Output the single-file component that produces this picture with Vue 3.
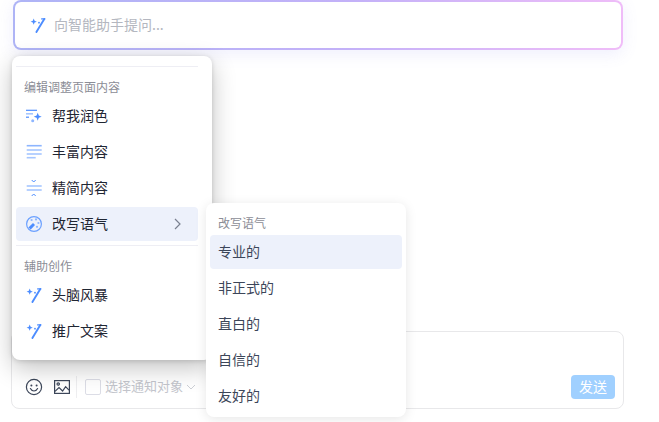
<script setup>
const group1 = [
  { text: '帮我润色', icon: 'polish' },
  { text: '丰富内容', icon: 'rich' },
  { text: '精简内容', icon: 'slim' },
  { text: '改写语气', icon: 'tone', active: true },
]
const group2 = ['头脑风暴', '推广文案']
const tones = ['专业的', '非正式的', '直白的', '自信的', '友好的']
</script>

<template>
  <div class="page">
    <div class="ask">
      <div class="ask-inner">
        <svg class="wand" width="18" height="18" viewBox="0 0 18 18">
          <path d="M16.3 2.9 8.4 16" stroke="#4d8dff" stroke-width="1.9" stroke-linecap="round" fill="none" />
          <path d="M13.6 2.9h3.2" stroke="#4d8dff" stroke-width="1.2" stroke-linecap="round" fill="none" />
          <path d="M5.7 2.6 6.6 4.8 8.8 5.7 6.6 6.6 5.7 8.8 4.8 6.6 2.6 5.7 4.8 4.8z" fill="#4d8dff" />
          <circle cx="11" cy="6.7" r="0.9" fill="#4d8dff" />
        </svg>
        <span class="placeholder">向智能助手提问...</span>
      </div>
    </div>

    <div class="composer">
      <div class="tools">
        <svg width="18" height="18" viewBox="0 0 18 18" fill="none" stroke="#3c4659" stroke-width="1.2">
          <circle cx="9" cy="9" r="7.6" />
          <circle cx="6.4" cy="7.4" r="1" fill="#3c4659" stroke="none" />
          <circle cx="11.6" cy="7.4" r="1" fill="#3c4659" stroke="none" />
          <path d="M5.4 10.6c.8 1.6 2.1 2.4 3.6 2.4s2.8-.8 3.6-2.4" stroke-linecap="round" />
        </svg>
        <svg width="16" height="14" viewBox="0 0 16 14" fill="none" stroke="#3c4659" stroke-width="1.2">
          <rect x="0.6" y="0.6" width="14.8" height="12.8" />
          <circle cx="4.2" cy="4" r="1.2" />
          <path d="M1 11.4 5 7.6l3.6 3.4 3-4.4 3.4 3.6" />
        </svg>
        <span class="sep"></span>
        <span class="check"></span>
        <span class="notify">选择通知对象</span>
        <svg class="caret" width="10" height="6" viewBox="0 0 10 6" fill="none" stroke="#cdd0d6" stroke-width="1">
          <path d="M1 1l4 4 4-4" />
        </svg>
      </div>
      <span class="send">发送</span>
    </div>

    <div class="menu main-menu">
      <div class="rule rule-top"></div>
      <div class="label">编辑调整页面内容</div>
      <div v-for="it in group1" :key="it.text" class="item" :class="{ active: it.active }">
        <svg v-if="it.icon === 'polish'" class="ico" width="18" height="18" viewBox="0 0 18 18" fill="none">
          <path d="M2 3.3h11" stroke="#4d8dff" stroke-width="1.2" />
          <path d="M2 6.8h7" stroke="#a6c6ff" stroke-width="1.6" />
          <path d="M2 10.2h3" stroke="#4d8dff" stroke-width="1.2" />
          <path d="M13.7 5.7 14.8 8.6 17.7 9.7 14.8 10.8 13.7 13.7 12.6 10.8 9.7 9.7 12.6 8.6z" fill="#4d8dff" />
          <circle cx="8.7" cy="13.7" r="1.5" fill="#8db5ff" />
        </svg>
        <svg v-else-if="it.icon === 'rich'" class="ico" width="18" height="18" viewBox="0 0 18 18" fill="none" stroke-width="1.6">
          <path d="M2.7 2.7h15" stroke="#8db5ff" />
          <path d="M2.7 7h15" stroke="#a6c6ff" />
          <path d="M2.7 11h15" stroke="#a6c6ff" />
          <path d="M2.7 14.7h9" stroke="#a6c6ff" />
        </svg>
        <svg v-else-if="it.icon === 'slim'" class="ico" width="18" height="18" viewBox="0 0 18 18" fill="none">
          <path d="M7.7 1 9.7 3l2-2" stroke="#4d8dff" stroke-width="1" />
          <path d="M2.7 7h15" stroke="#a6c6ff" stroke-width="1.6" />
          <path d="M2.7 11h15" stroke="#a6c6ff" stroke-width="1.6" />
          <path d="M7.7 17 9.7 15l2 2" stroke="#4d8dff" stroke-width="1" />
        </svg>
        <svg v-else class="ico" width="18" height="18" viewBox="0 0 18 18" fill="none">
          <circle cx="10" cy="9" r="7.4" stroke="#6ba0ff" stroke-width="1.2" />
          <path d="M4.4 12.4 9 8l2 2-4.2 4.6z" fill="#4d8dff" />
          <circle cx="7.6" cy="5" r="1.1" fill="#8db5ff" />
          <circle cx="12" cy="4.4" r="1.1" fill="#8db5ff" />
          <circle cx="14.4" cy="8" r="1.1" fill="#8db5ff" />
          <circle cx="13" cy="11.8" r="1.1" fill="#8db5ff" />
        </svg>
        <span class="item-text">{{ it.text }}</span>
        <svg v-if="it.active" class="arrow" width="7" height="12" viewBox="0 0 7 12" fill="none" stroke="#7a8090" stroke-width="1.2">
          <path d="M1 1l5 5-5 5" />
        </svg>
      </div>
      <div class="rule rule-mid"></div>
      <div class="label">辅助创作</div>
      <div v-for="t in group2" :key="t" class="item">
        <svg class="ico" width="18" height="18" viewBox="0 0 18 18">
          <path d="M16.3 2.9 8.4 16" stroke="#4d8dff" stroke-width="1.9" stroke-linecap="round" fill="none" />
          <path d="M13.6 2.9h3.2" stroke="#4d8dff" stroke-width="1.2" stroke-linecap="round" fill="none" />
          <path d="M5.7 2.6 6.6 4.8 8.8 5.7 6.6 6.6 5.7 8.8 4.8 6.6 2.6 5.7 4.8 4.8z" fill="#4d8dff" />
          <circle cx="11" cy="6.7" r="0.9" fill="#4d8dff" />
        </svg>
        <span class="item-text">{{ t }}</span>
      </div>
    </div>

    <div class="menu sub-menu">
      <div class="label">改写语气</div>
      <div v-for="(t, i) in tones" :key="t" class="item sub-item" :class="{ active: i === 0 }">
        <span class="item-text">{{ t }}</span>
      </div>
    </div>
  </div>
</template>

<style scoped>
.page {
  position: relative;
  width: 659px;
  height: 422px;
  overflow: hidden;
  background: #fff;
  font-family: "Noto Sans CJK SC", "Liberation Sans", sans-serif;
  font-size: 14px;
  padding: 0 36px 0 13px;
  box-sizing: border-box;
}
.ask {
  height: 50px;
  padding: 2px;
  box-sizing: border-box;
  border-radius: 8px;
  background: linear-gradient(100deg, #aeb4f6 0%, #c3b1f8 55%, #f0bdf8 100%);
  box-shadow: 0 4px 16px rgba(120, 120, 240, 0.12);
}
.ask-inner {
  height: 100%;
  background: #fff;
  border-radius: 6px;
  display: flex;
  align-items: center;
  padding-left: 13px;
  gap: 8px;
}
.wand { flex: none; margin-bottom: 1px; }
.placeholder { color: #b4b7c0; line-height: 20px; padding-bottom: 2px; }
.composer {
  margin: 281px -1px 0 -2px;
  height: 78px;
  box-sizing: border-box;
  border: 1px solid #e8e8ea;
  border-radius: 8px;
  background: #fff;
  display: flex;
  align-items: flex-end;
  justify-content: space-between;
  padding: 0 8px 9px 13px;
}
.tools {
  display: flex;
  align-items: center;
  height: 24px;
}
.tools svg:nth-child(2) { margin-left: 11px; }
.sep {
  width: 1px;
  height: 22px;
  background: #eeeef0;
  margin: 0 8px 0 6px;
}
.check {
  width: 16px;
  height: 16px;
  box-sizing: border-box;
  border: 1px solid #dcdde6;
  border-radius: 2px;
  margin-right: 4px;
}
.notify { color: #c3c5cc; font-size: 13px; line-height: 20px; padding-bottom: 2px; }
.caret { margin-left: 3px; }
.send {
  width: 44px;
  height: 24px;
  line-height: 22px;
  text-align: center;
  color: #fff;
  background: #a0d0ff;
  border-radius: 4px;
}
.menu {
  position: absolute;
  width: 200px;
  box-sizing: border-box;
  background: #fff;
  border-radius: 8px;
  padding: 0 4px;
}
.main-menu {
  left: 12px;
  top: 56px;
  height: 304px;
  padding-right: 14px;
  box-shadow: 0 8px 24px rgba(0, 0, 0, 0.24), 0 1px 5px rgba(0, 0, 0, 0.14);
}
.sub-menu {
  left: 206px;
  top: 203px;
  height: 214px;
  box-shadow: 0 2px 12px rgba(0, 0, 0, 0.1);
}
.rule { height: 1px; background: #eeeef4; }
.rule-top { margin-top: 10px; }
.rule-mid { margin-top: 4px; }
.label {
  color: #8b8d96;
  font-size: 12px;
  line-height: 16px;
  padding: 0 0 2px 8px;
  box-sizing: border-box;
  height: 16px;
  margin-top: 12px;
  margin-bottom: 4px;
}
.item {
  display: flex;
  align-items: center;
  height: 34px;
  margin-bottom: 2px;
  padding: 0 17px 0 8px;
  border-radius: 4px;
  color: #1f2633;
  line-height: 20px;
}
.item.active { background: #edf1fb; }
.ico { flex: none; margin-right: 10px; }
.item-text { flex: 1; padding-bottom: 2px; }
.arrow { flex: none; }
.sub-item { color: #3c4659; }
</style>
